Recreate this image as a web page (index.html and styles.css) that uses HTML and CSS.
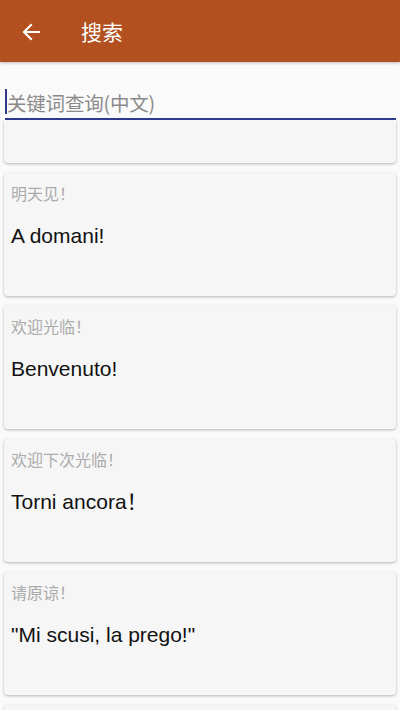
FILE: index.html
```html
<!DOCTYPE html>
<html lang="zh">
<head>
<meta charset="utf-8">
<title>搜索</title>
<link rel="stylesheet" href="styles.css">
</head>
<body>
<div class="app">
  <header class="appbar">
    <svg class="back" width="18" height="18" viewBox="0 0 18 18" aria-hidden="true">
      <path d="M17 9H2.5M9 2L2 9l7 7" fill="none" stroke="#fff" stroke-width="2.1" stroke-linecap="square"/>
    </svg>
    <h1 class="title">搜索</h1>
  </header>
  <div class="search">
    <div class="field">
      <span class="cursor"></span>
      <span class="placeholder">关键词查询(中文)</span>
    </div>
  </div>
  <div class="list">
    <div class="card card-clipped"></div>
    <div class="card">
      <div class="zh">明天见！</div>
      <div class="it">A domani!</div>
    </div>
    <div class="card">
      <div class="zh">欢迎光临！</div>
      <div class="it">Benvenuto!</div>
    </div>
    <div class="card">
      <div class="zh">欢迎下次光临！</div>
      <div class="it">Torni ancora！</div>
    </div>
    <div class="card">
      <div class="zh">请原谅！</div>
      <div class="it">"Mi scusi, la prego!"</div>
    </div>
    <div class="card"></div>
  </div>
</div>
</body>
</html>
```
FILE: styles.css
```css
html, body {
  margin: 0;
  padding: 0;
  height: 100%;
  overflow: hidden;
  background: #fafafa;
}
.app {
  display: flex;
  flex-direction: column;
  height: 710px;
  font-family: "Liberation Sans", "Noto Sans CJK SC", sans-serif;
}
.appbar {
  height: 62px;
  flex: none;
  background: #b2501f;
  display: flex;
  align-items: center;
  padding-left: 22px;
  box-shadow: 0 1px 3px rgba(0,0,0,0.25);
  position: relative;
  z-index: 2;
}
.back {
  display: block;
  margin-top: 1px;
}
.title {
  margin: 0 0 0 41px;
  font-family: "Noto Sans CJK SC", sans-serif;
  font-weight: 400;
  font-size: 21px;
  color: #fff;
  line-height: 1;
}
.search {
  flex: none;
  height: 58px;
  background: #fafafa;
  padding: 0 4px 0 5px;
  display: flex;
  align-items: flex-end;
  position: relative;
  z-index: 1;
}
.field {
  flex: 1;
  height: 31px;
  border-bottom: 2px solid #2f3a8a;
  display: flex;
  align-items: center;
}
.cursor {
  width: 2px;
  height: 25px;
  background: #2f3a8a;
  margin-bottom: 2px;
}
.placeholder {
  font-family: "Noto Sans CJK SC", sans-serif;
  font-size: 19.5px;
  color: #8a8a8a;
  line-height: 1;
  letter-spacing: -0.2px;
}
.list {
  flex: 1;
  overflow: hidden;
  display: flex;
  flex-direction: column;
  gap: 10px;
  padding: 0 4px;
}
.card {
  flex: none;
  height: 123px;
  box-sizing: border-box;
  background: #f6f6f6;
  border-radius: 4px;
  box-shadow: 0 1px 3px rgba(0,0,0,0.28);
  padding: 10px 7px 0 7px;
}
.card-clipped {
  height: 43px;
  border-radius: 0 0 4px 4px;
}
.zh {
  font-family: "Noto Sans CJK SC", sans-serif;
  font-size: 16px;
  line-height: 20px;
  color: #ababab;
}
.it {
  margin-top: 19px;
  font-size: 21px;
  line-height: 28px;
  color: #111;
}
```
